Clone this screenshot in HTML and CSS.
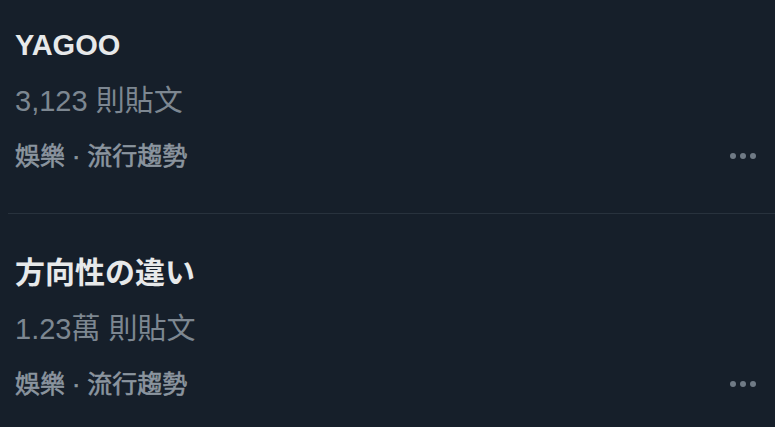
FILE: index.html
```html
<!DOCTYPE html>
<html lang="zh-Hant">
<head>
<meta charset="utf-8">
<link rel="stylesheet" href="styles.css">
</head>
<body>
<div class="list">
  <div class="item first">
    <div class="text">
      <div class="title">YAGOO</div>
      <div class="stats">3,123 則貼文</div>
      <div class="cat">娛樂 · 流行趨勢</div>
    </div>
    <div class="more"><span></span><span></span><span></span></div>
  </div>
  <div class="item">
    <div class="text">
      <div class="title jp" lang="ja">方向性の違い</div>
      <div class="stats">1.23萬 則貼文</div>
      <div class="cat">娛樂 · 流行趨勢</div>
    </div>
    <div class="more"><span></span><span></span><span></span></div>
  </div>
</div>
</body>
</html>
```
FILE: styles.css
```css
html, body {
  margin: 0;
  padding: 0;
  background: #161f2a;
  overflow: hidden;
}
body {
  font-family: "Liberation Sans", "Noto Sans CJK TC", sans-serif;
}
.list {
  display: flex;
  flex-direction: column;
}
.item {
  display: flex;
  justify-content: space-between;
  padding: 31px 19px 30px 7px;
  border-bottom: 1px solid #28323d;
  margin-left: 8px;
}
.item.first {
  padding-top: 17px;
}
.text {
  display: flex;
  flex-direction: column;
}
.title {
  height: 56px;
  line-height: 56px;
  font-size: 29px;
  font-weight: bold;
  color: #e7e9ea;
}
.title.jp {
  font-family: "Liberation Sans", "Noto Sans CJK JP", sans-serif;
  font-size: 30px;
}
.stats {
  height: 56px;
  line-height: 56px;
  font-size: 29px;
  color: #7d8791;
}
.cat {
  height: 54px;
  line-height: 54px;
  font-size: 25px;
  color: #8b959f;
  -webkit-text-stroke: 0.6px #8b959f;
}
.more {
  align-self: flex-end;
  height: 54px;
  display: flex;
  align-items: center;
  gap: 4px;
}
.more span {
  width: 6px;
  height: 6px;
  border-radius: 50%;
  background: #6f7a85;
}
```
